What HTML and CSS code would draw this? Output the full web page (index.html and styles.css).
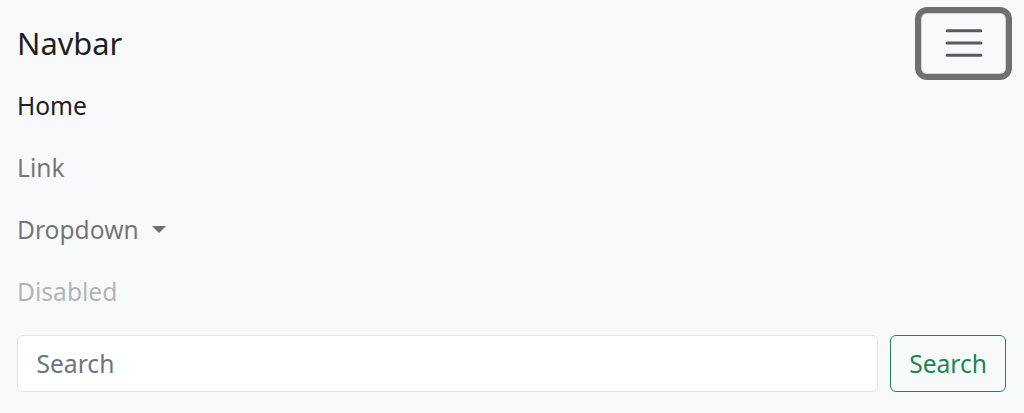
FILE: index.html
```html
<!DOCTYPE html>
<html lang="en">
<head>
    <meta charset="UTF-8">
    <meta name="viewport" content="width=device-width, initial-scale=1.0">
    <title>Navbar</title>
    <link rel="stylesheet" href="styles.css">
</head>
<body>
    <nav class="navbar">
        <div class="navbar-top">
            <a class="brand" href="#">Navbar</a>
            <button class="toggler" type="button" aria-label="Toggle navigation">
                <svg width="46" height="46" viewBox="0 0 30 30">
                    <path d="M4 7h22M4 15h22M4 23h22" stroke="rgba(33,37,41,0.75)" stroke-width="2" stroke-linecap="round" fill="none"/>
                </svg>
            </button>
        </div>
        <ul class="nav-list">
            <li><a class="nav-link active" href="#">Home</a></li>
            <li><a class="nav-link" href="#">Link</a></li>
            <li><a class="nav-link caret" href="#">Dropdown</a></li>
            <li><a class="nav-link disabled">Disabled</a></li>
        </ul>
        <form class="search-form">
            <input class="search-input" type="search" placeholder="Search">
            <button class="search-btn" type="submit">Search</button>
        </form>
    </nav>
</body>
</html>
```

FILE: styles.css
```css
body {
    margin: 0;
    background-color: #f8f9fa;
    font-family: "Noto Sans", "Open Sans", sans-serif;
}
.navbar {
    padding: 12px 18px 12px 17px;
}
.navbar-top {
    display: flex;
    align-items: center;
    justify-content: space-between;
    height: 62px;
}
.brand {
    font-size: 30.8px;
    line-height: 46px;
    color: rgba(0, 0, 0, 0.9);
    text-decoration: none;
}
.toggler {
    width: 85px;
    height: 61px;
    padding: 0;
    display: flex;
    align-items: center;
    justify-content: center;
    background: transparent;
    border: 1px solid rgba(0, 0, 0, 0.15);
    border-radius: 6px;
    box-shadow: 0 0 0 6px rgba(0, 0, 0, 0.55);
}

.nav-list {
    list-style: none;
    margin: 0 0 13px;
    padding: 0;
}
.nav-link {
    display: block;
    padding: 12.5px 0;
    font-size: 24.6px;
    line-height: 37px;
    color: rgba(0, 0, 0, 0.55);
    text-decoration: none;
}
.nav-link.active {
    color: rgba(0, 0, 0, 0.9);
}
.nav-link.disabled {
    color: rgba(0, 0, 0, 0.3);
}
.caret::after {
    content: "";
    display: inline-block;
    margin-left: 13px;
    vertical-align: 6px;
    border-top: 7.4px solid;
    border-left: 7.4px solid transparent;
    border-right: 7.4px solid transparent;
}

.search-form {
    display: flex;
    gap: 12px;
}
.search-input {
    flex: 1;
    height: 57px;
    padding: 0 18.5px;
    font-family: inherit;
    font-size: 24.6px;
    color: #212529;
    background-color: #fff;
    border: 1px solid #dee2e6;
    border-radius: 6px;
    box-sizing: border-box;
}
.search-input::placeholder {
    color: #6c757d;
}
.search-btn {
    height: 57px;
    padding: 0 18px;
    font-family: inherit;
    font-size: 24.6px;
    color: #198754;
    background: transparent;
    border: 1px solid #198754;
    border-radius: 6px;
}
```
